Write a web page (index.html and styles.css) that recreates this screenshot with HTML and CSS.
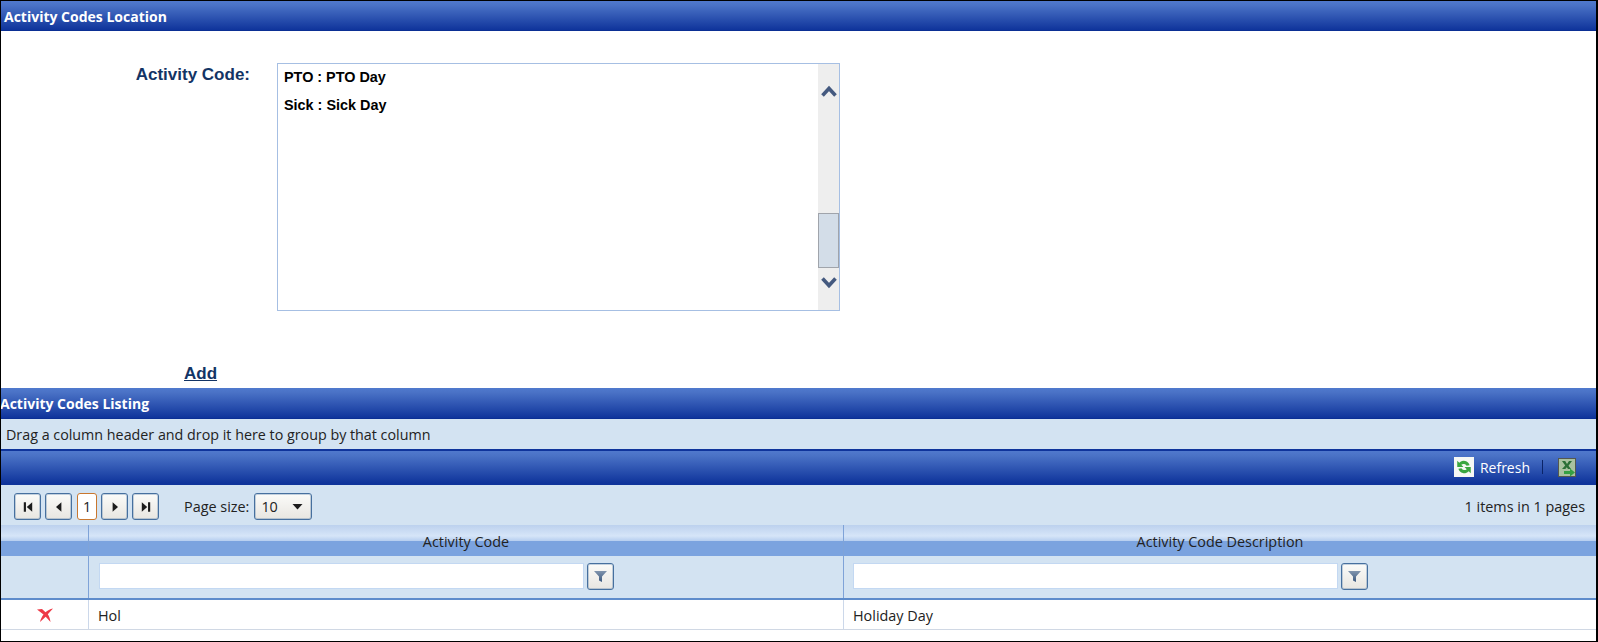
FILE: index.html
```html
<!DOCTYPE html>
<html>
<head>
	<meta charset="UTF-8">
	<title>Activity Codes Location</title>
	<link rel="stylesheet" href="styles.css">
</head>
<body>
	<div class="page">
		<div class="titlebar">Activity Codes Location</div>
		<div class="form">
			<div class="form-row">
				<label class="form-label">Activity Code:</label>
				<div class="listbox">
					<div class="listbox-items">
						<div class="listbox-item">PTO : PTO Day</div>
						<div class="listbox-item">Sick : Sick Day</div>
					</div>
					<div class="scrollbar">
						<svg class="scroll-arrow up" width="16" height="12" viewBox="0 0 16 12"><path d="M1.500 10.500 8 3.500l6.500 7" fill="none" stroke="#44597f" stroke-width="3.600"/></svg>
						<div class="scroll-thumb"></div>
						<svg class="scroll-arrow down" width="16" height="12" viewBox="0 0 16 12"><path d="M1.500 1.500 8 8.500l6.500-7" fill="none" stroke="#44597f" stroke-width="3.600"/></svg>
					</div>
				</div>
			</div>
			<a class="add-link" href="#">Add</a>
		</div>
		<div class="titlebar listing">Activity Codes Listing</div>
		<div class="group-panel">Drag a column header and drop it here to group by that column</div>
		<div class="toolbar">
			<span class="refresh-icon">
				<svg width="18" height="18" viewBox="0 0 16 16"><path d="M13 6.500A5.500 5.500 0 0 0 3.800 4.200L2 2.500v5.500h5.500L5.600 6.100A3 3 0 0 1 10.300 6.800z" fill="#3aa63f"/><path d="M3 9.500a5.500 5.500 0 0 0 9.200 2.300l1.800 1.700V8H8.500l1.900 1.900a3 3 0 0 1-4.700-.7z" fill="#3aa63f"/></svg>
			</span>
			<span class="refresh-text">Refresh</span>
			<span class="toolbar-sep"></span>
			<span class="excel-icon">
				<svg width="18" height="19" viewBox="0 0 18 19"><rect x="0.500" y="0.500" width="17" height="18" fill="#a9c2a0" stroke="#55584f"/><path d="M4 3h3.200L9 6l2-3h3l-3.500 4.800L13 11h-3L8.800 9.200 7.300 11H4l3.200-3.600z" fill="#2c6f37"/><path d="M6 13h6v-2.500l5 4-5 4V16H6z" fill="#35a043"/></svg>
			</span>
		</div>
		<div class="pager">
			<div class="pager-left">
				<button class="pager-btn"><svg width="12" height="12" viewBox="0 0 10 10"><path d="M1.500 1h1.800v8H1.500zM8.500 1v8L4 5z" fill="#1c1c1c"/></svg></button>
				<button class="pager-btn"><svg width="12" height="12" viewBox="0 0 10 10"><path d="M7 1v8L2.500 5z" fill="#1c1c1c"/></svg></button>
				<span class="pager-current">1</span>
				<button class="pager-btn"><svg width="12" height="12" viewBox="0 0 10 10"><path d="M3 1v8l4.500-4z" fill="#1c1c1c"/></svg></button>
				<button class="pager-btn"><svg width="12" height="12" viewBox="0 0 10 10"><path d="M1.500 1v8L6 5zM6.700 1h1.800v8H6.700z" fill="#1c1c1c"/></svg></button>
				<span class="page-size-label">Page size:</span>
				<div class="page-size"><span>10</span><svg width="11" height="6" viewBox="0 0 10 6"><path d="M0 0h10L5 5.500z" fill="#1c1c1c"/></svg></div>
			</div>
			<div class="pager-info">1 items in 1 pages</div>
		</div>
		<div class="grid-row grid-head">
			<div class="cell col-del"></div>
			<div class="cell col-code">Activity Code</div>
			<div class="cell col-desc">Activity Code Description</div>
		</div>
		<div class="grid-row grid-filter">
			<div class="cell col-del"></div>
			<div class="cell col-code">
				<input class="filter-input" type="text">
				<button class="filter-btn"><svg width="15" height="13" viewBox="0 0 15 13"><defs><linearGradient id="funnel" x1="0" y1="0" x2="0" y2="1"><stop offset="0" stop-color="#8094ad"/><stop offset="1" stop-color="#3d5a80"/></linearGradient></defs><path d="M1 1h13L9 6.500V12l-3-1.500v-4z" fill="url(#funnel)"/></svg></button>
			</div>
			<div class="cell col-desc">
				<input class="filter-input" type="text">
				<button class="filter-btn"><svg width="15" height="13" viewBox="0 0 15 13"><path d="M1 1h13L9 6.500V12l-3-1.500v-4z" fill="url(#funnel)"/></svg></button>
			</div>
		</div>
		<div class="grid-row grid-data">
			<div class="cell col-del">
				<svg class="del-icon" width="16" height="15" viewBox="0 0 16 15"><path d="M0 1.500 5 1l3.500 3.200C10.500 2.500 13 1 16 .5l-5.200 5.800c1.300 2 2.200 4.200 2.700 7.700l-4.800-5.300L3 14c.7-3 2-5.500 3.500-7.500z" fill="#ee3a47"/></svg>
			</div>
			<div class="cell col-code">Hol</div>
			<div class="cell col-desc">Holiday Day</div>
		</div>
	</div>
</body>
</html>
```

FILE: styles.css
```css
html, body {
	margin: 0;
	padding: 0;
}
.page {
	box-sizing: border-box;
	width: 1598px;
	height: 642px;
	border: 1px solid #000;
	border-right-width: 2px;
	background: #fff;
	font-family: "Open Sans", "Noto Sans", sans-serif;
	font-size: 14.4px;
	color: #1d2a3a;
	overflow: hidden;
}
.titlebar {
	height: 30px;
	line-height: 31px;
	padding-left: 3px;
	background: linear-gradient(#5079cd, #4a72c6 15%, #0f349b);
	border-bottom: 1px solid #0b2f94;
	box-sizing: border-box;
	color: #fff;
	font-size: 14px;
	font-weight: bold;
}
.listing {
	height: 31px;
	padding-left: 0;
	text-indent: -1px;
}
.form {
	height: 357px;
	box-sizing: border-box;
	padding-top: 32px;
	position: relative;
}
.form-row {
	display: flex;
}
.form-label {
	width: 249px;
	text-align: right;
	padding-top: 2px;
	font-family: "Liberation Sans", sans-serif;
	font-size: 17px;
	font-weight: bold;
	color: #133465;
}
.listbox {
	margin-left: 27px;
	width: 563px;
	height: 248px;
	box-sizing: border-box;
	border: 1px solid #a6bfe3;
	display: flex;
	justify-content: space-between;
}
.listbox-items {
	padding: 0 0 0 6px;
}
.listbox-item {
	height: 28px;
	line-height: 26px;
	font-family: "Liberation Sans", sans-serif;
	font-size: 14.4px;
	font-weight: bold;
	color: #000;
}
.scrollbar {
	width: 21px;
	background: #eeeeee;
	display: flex;
	flex-direction: column;
	align-items: center;
}
.scroll-arrow.up {
	margin-top: 21px;
	margin-bottom: 116px;
}
.scroll-thumb {
	width: 21px;
	height: 55px;
	box-sizing: border-box;
	border: 1px solid #a0a4ab;
	background: #d3dde8;
	margin-bottom: 9px;
}
.add-link {
	position: absolute;
	left: 183px;
	top: 333px;
	font-family: "Liberation Sans", sans-serif;
	font-size: 17px;
	font-weight: bold;
	color: #133465;
}
.group-panel {
	height: 30px;
	line-height: 31px;
	padding-left: 5px;
	background: #d3e3f2;
	color: #222;
	box-sizing: border-box;
	font-size: 14.3px;
}
.toolbar {
	height: 36px;
	box-sizing: border-box;
	border-top: 2px solid #0f349b;
	border-bottom: 2px solid #0f349b;
	background: linear-gradient(#5079cd, #4a72c6 15%, #0f349b);
	display: flex;
	align-items: center;
	justify-content: flex-end;
	padding-right: 20px;
	color: #fff;
}
.refresh-icon {
	width: 20px;
	height: 20px;
	background: #f6f8f4;
	display: flex;
	align-items: center;
	justify-content: center;
	margin-right: 6px;
}
.refresh-text {
	font-size: 14px;
	margin-right: 12px;
}
.toolbar-sep {
	width: 1px;
	height: 14px;
	background: #0a2468;
	margin-right: 15px;
}
.excel-icon {
	height: 19px;
}
.pager {
	height: 40px;
	box-sizing: border-box;
	padding: 3px 11px 0 13px;
	background: #d3e3f2;
	display: flex;
	align-items: center;
	justify-content: space-between;
	color: #222;
}
.pager-left {
	display: flex;
	align-items: center;
	gap: 4px;
}
.pager-btn,
.filter-btn {
	box-sizing: border-box;
	width: 27px;
	height: 27px;
	padding: 0;
	border: 1px solid #46709f;
	border-radius: 3px;
	background: linear-gradient(#fbfbf9, #e8e6e1);
	box-shadow: inset 0 0 0 1px rgba(70, 112, 159, 0.3);
	display: flex;
	align-items: center;
	justify-content: center;
}
.pager-current {
	box-sizing: border-box;
	width: 20px;
	height: 27px;
	margin: 0 0 0 1px;
	line-height: 25px;
	text-align: center;
	border: 1px solid #c9772f;
	border-radius: 3px;
	background: #fff;
}
.page-size-label {
	margin-left: 21px;
}
.page-size {
	box-sizing: border-box;
	width: 58px;
	height: 27px;
	margin-left: 1px;
	padding: 0 8px 0 6px;
	border: 1px solid #46709f;
	border-radius: 3px;
	background: linear-gradient(#fbfbf9, #e8e6e1);
	box-shadow: inset 0 0 0 1px rgba(70, 112, 159, 0.3);
	display: flex;
	align-items: center;
	justify-content: space-between;
}
.grid-row {
	display: flex;
}
.cell {
	box-sizing: border-box;
	display: flex;
	align-items: center;
}
.col-del {
	width: 88px;
	justify-content: center;
	border-right: 1px solid #7fa3d8;
}
.col-code {
	width: 755px;
	border-right: 1px solid #7fa3d8;
	padding-left: 10px;
}
.col-desc {
	flex: 1;
	padding-left: 9px;
}
.grid-head {
	height: 31px;
}
.grid-head .cell {
	background: linear-gradient(#bcd1ee, #d6e5f8 35%, #b9d0f0 50%, #7ba3df 52%, #7ba3df);
	justify-content: center;
	padding: 2px 0 0;
	color: #222;
}
.grid-filter {
	height: 44px;
	background: #d3e3f2;
	border-bottom: 2px solid #5e8ccb;
	box-sizing: border-box;
}
.grid-filter .cell {
	gap: 3px;
	padding-bottom: 2px;
}
.filter-input {
	box-sizing: border-box;
	width: 485px;
	height: 26px;
	border: 1px solid #c3d8f2;
	background: #fff;
	padding: 0;
}
.grid-data {
	height: 30px;
	border-bottom: 1px solid #d0d8e4;
	box-sizing: border-box;
	color: #222;
}
.grid-data .cell {
	border-right-color: #ccd8ea;
	padding-top: 2px;
}
.grid-data .col-code {
	padding-left: 9px;
}
```
